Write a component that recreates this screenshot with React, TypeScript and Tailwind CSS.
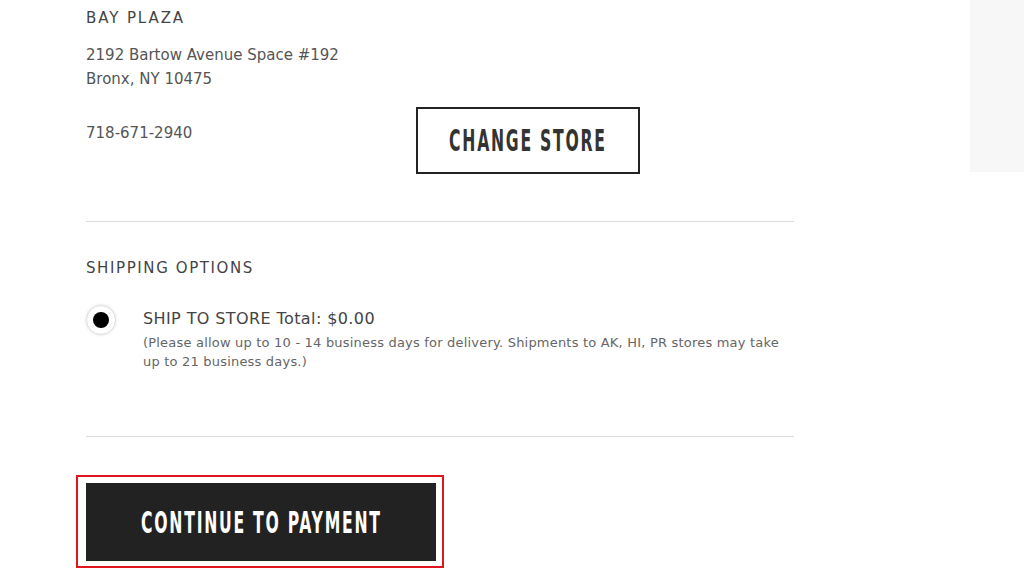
import React from "react"

const body = { fontFamily: '"DejaVu Sans", "Open Sans", sans-serif' }
const condensed = { fontFamily: '"DejaVu Sans Condensed", "DejaVu Sans", sans-serif' }

const App = () => {
    return (
        <div className="w-[1024px] h-[576px] overflow-hidden bg-white flex" style={body}>
            <div className="w-[794px] pl-[86px] shrink-0">
                {/* STORE */}
                <h3 className="mt-[8px] text-[15px] leading-[20px] tracking-[1.9px] text-[#444]">BAY PLAZA</h3>
                <p className="mt-[15px] text-[15px] leading-[24px] text-[#555]">
                    2192 Bartow Avenue Space #192
                    <br />
                    Bronx, NY 10475
                </p>
                <div className="flex items-start">
                    <p className="w-[330px] mt-[30px] text-[15px] leading-[24px] text-[#555]">718-671-2940</p>
                    <button className="mt-[16px] w-[224px] h-[67px] border-2 border-[#222] flex items-center justify-center">
                        <span
                            className="inline-block whitespace-nowrap text-[30px] font-bold tracking-[3px] text-[#333] scale-x-[0.58]"
                            style={condensed}
                        >
                            CHANGE STORE
                        </span>
                    </button>
                </div>

                <div className="mt-[47px] h-px bg-[#dcdcdc]" />

                {/* SHIPPING */}
                <h3 className="mt-[36px] text-[15px] leading-[20px] tracking-[1.6px] text-[#444]">SHIPPING OPTIONS</h3>
                <div className="mt-[27px] flex items-start">
                    <div className="w-[30px] h-[30px] rounded-full border border-[#ddd] shadow-[0_0_3px_rgba(0,0,0,0.15)] flex items-center justify-center shrink-0">
                        <div className="w-[16px] h-[16px] rounded-full bg-black" />
                    </div>
                    <div className="ml-[27px] pt-[4px]">
                        <p className="text-[16px] leading-[20px] tracking-[0.4px] text-[#444]">SHIP TO STORE Total: $0.00</p>
                        <p className="mt-[4px] text-[13px] leading-[19px] tracking-[0.2px] text-[#666] whitespace-nowrap">
                            (Please allow up to 10 - 14 business days for delivery. Shipments to AK, HI, PR stores may take
                            <br />
                            up to 21 business days.)
                        </p>
                    </div>
                </div>

                <div className="mt-[65px] h-px bg-[#dcdcdc]" />

                {/* CONTINUE */}
                <div className="mt-[38px] -ml-[10px] w-[368px] border-2 border-[#e0161e] pl-[8px] pr-[6px] pt-[6px] pb-[5px]">
                    <button className="w-[350px] h-[78px] bg-[#222] flex items-center justify-center">
                        <span
                            className="inline-block whitespace-nowrap text-[30px] font-bold tracking-[3px] text-white scale-x-[0.58]"
                            style={condensed}
                        >
                            CONTINUE TO PAYMENT
                        </span>
                    </button>
                </div>
            </div>
            <div className="flex-1" />
            <div className="w-[54px] h-[172px] bg-[#f7f7f7] shrink-0" />
        </div>
    )
}

export default App
